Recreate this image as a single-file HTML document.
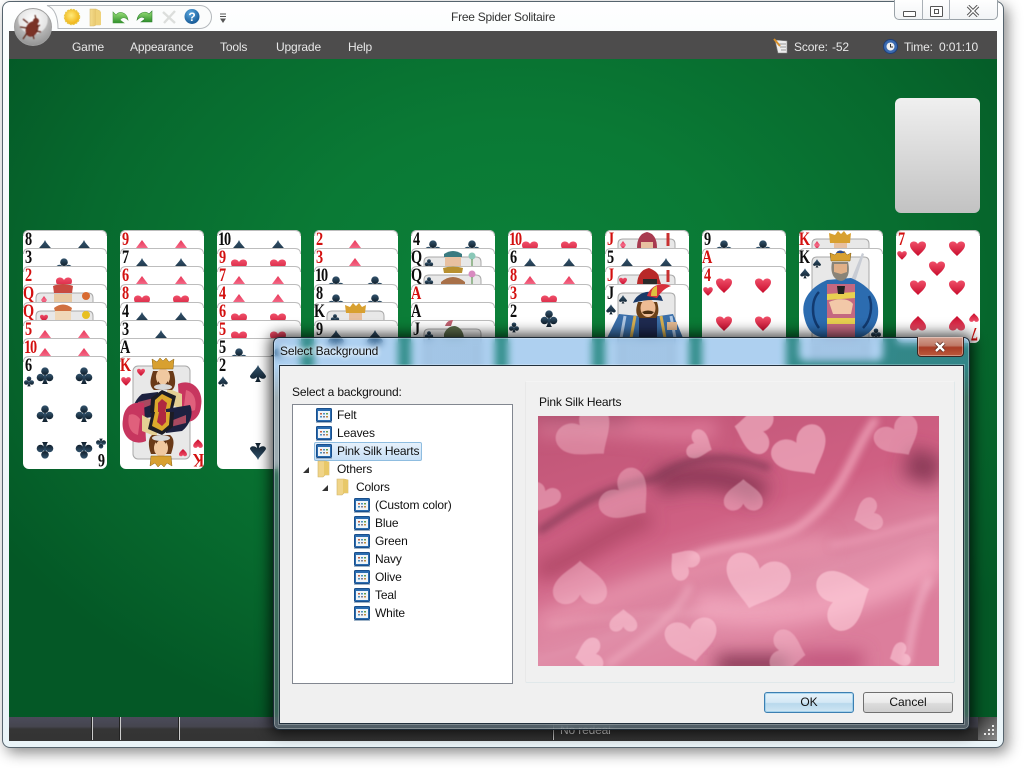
<!DOCTYPE html>
<html>
<head>
<meta charset="utf-8">
<title>Free Spider Solitaire</title>
<style>
html,body{margin:0;padding:0;background:#fff;width:1024px;height:768px;overflow:hidden}
body{position:relative;font-family:"Liberation Sans",sans-serif;font-size:12px;color:#111}
.a{position:absolute}
.t{position:absolute;white-space:nowrap;line-height:16px;letter-spacing:-.15px}
.m{color:#e8e8e8;top:39px}
svg text.r,svg text.b{font-family:"Liberation Serif",serif;font-weight:bold;font-size:19px;transform-box:fill-box;transform-origin:0 50%;transform:translateY(-1px) scaleX(.75)}
svg text.r{fill:#d3100f}
svg text.b{fill:#0c0c0c}
svg text.n{letter-spacing:-1.5px}
.btn{position:absolute;top:692px;width:88px;height:19px;text-align:center;line-height:19px;border-radius:3px}
</style>
</head>
<body>
<!-- window -->
<div class="a" style="left:2px;top:1px;width:1000px;height:745px;border:1px solid #56646e;border-radius:8px;background:linear-gradient(#fff 0,#fbfdfe 30px,#eaf4f8 100%);box-shadow:4px 5px 14px rgba(0,0,0,.45)"></div>
<div class="a" style="left:9px;top:31px;width:988px;height:28px;background:#4d4c4c"></div>
<div class="a" style="left:9px;top:59px;width:988px;height:658px;background:radial-gradient(ellipse 620px 470px at 510px 230px,#0c8039 0,#0a7a35 35%,#076a2e 70%,#045826 100%)"></div>
<div class="a" style="left:9px;top:717px;width:988px;height:24px;background:linear-gradient(#4b4b5a 0,#45454f 40%,#353535 50%,#343434 100%)"></div>
<div class="a" style="left:92px;top:717px;width:1px;height:23px;background:#ccc;box-shadow:-1px 0 #222"></div>
<div class="a" style="left:120px;top:717px;width:1px;height:23px;background:#ccc;box-shadow:-1px 0 #222"></div>
<div class="a" style="left:179px;top:717px;width:1px;height:23px;background:#ccc;box-shadow:-1px 0 #222"></div>
<div class="a" style="left:553px;top:717px;width:1px;height:23px;background:#ccc;box-shadow:-1px 0 #222"></div>
<div class="t" style="left:560px;top:722px;color:#ddd">No redeal</div>
<div class="a" style="left:978px;top:717px;width:19px;height:23px;background:linear-gradient(135deg,#3a3a3a,#8c8c8c)"></div>
<svg class="a" style="left:978px;top:717px" width="19" height="23"><path d="M14 8h2v2h-2zM10 12h2v2h-2zM14 12h2v2h-2zM6 16h2v2h-2zM10 16h2v2h-2zM14 16h2v2h-2z" fill="#e8e8e8"/></svg>

<!-- window buttons -->
<div class="a" style="left:894px;top:-1px;width:102px;height:20px;border:1px solid #9aa2a8;border-top:0;border-radius:0 0 5px 5px;background:linear-gradient(#fff,#f2f4f6)"></div>
<div class="a" style="left:922px;top:0;width:1px;height:20px;background:#aab0b6"></div>
<div class="a" style="left:949px;top:0;width:1px;height:20px;background:#aab0b6"></div>
<div class="a" style="left:903px;top:11px;width:11px;height:4px;border:1px solid #555;background:#fff;border-radius:1px"></div>
<div class="a" style="left:930px;top:6px;width:11px;height:9px;border:1px solid #555;background:#fff;border-radius:1px"></div>
<div class="a" style="left:934px;top:9px;width:3px;height:3px;border:1px solid #555"></div>
<svg class="a" style="left:965px;top:5px" width="16" height="12"><path d="M3 1L13 11M13 1L3 11" stroke="#555" stroke-width="3.4" fill="none"/><path d="M3 1L13 11M13 1L3 11" stroke="#fff" stroke-width="1.4" fill="none"/></svg>
<div class="t" style="left:451px;top:9px;color:#333;letter-spacing:-.25px">Free Spider Solitaire</div>

<!-- toolbar -->
<svg class="a" style="left:0;top:0" width="240" height="60">
<defs>
<radialGradient id="orb" cx=".5" cy=".3" r=".75"><stop offset="0" stop-color="#fff"/><stop offset=".5" stop-color="#e4e4e4"/><stop offset=".56" stop-color="#b4b4b4"/><stop offset="1" stop-color="#8e8e8e"/></radialGradient>
<radialGradient id="sun" cx=".45" cy=".4" r=".6"><stop offset="0" stop-color="#ffeb7a"/><stop offset="1" stop-color="#f0b010"/></radialGradient>
<linearGradient id="fold" x1="0" x2="1"><stop offset="0" stop-color="#f5dc8c"/><stop offset="1" stop-color="#dcb85a"/></linearGradient>
<linearGradient id="gr" x1="0" y1="0" x2="0" y2="1"><stop offset="0" stop-color="#9be07a"/><stop offset="1" stop-color="#2f8f2a"/></linearGradient>
<radialGradient id="hp" cx=".4" cy=".3" r=".8"><stop offset="0" stop-color="#5aa8e0"/><stop offset="1" stop-color="#0e4f8c"/></radialGradient>
<filter id="sb"><feGaussianBlur stdDeviation=".5"/></filter>
</defs>
<path d="M47 5.500H200A11.500 11.500 0 0 1 200 28.500H58C58 18 55 8 47 5.500Z" fill="#fbfcfc" stroke="#b4b8bc"/>
<circle cx="33" cy="27" r="18.500" fill="url(#orb)" stroke="#a0a0a0"/>
<g filter="url(#sb)">
<g fill="#7a3028">
<ellipse cx="32" cy="29" rx="6" ry="8" transform="rotate(25 32 29)"/>
<circle cx="36" cy="21" r="3"/></g>
<path d="M28 23L23 19M27 28L20 27M27 33L23 39M37 27L40 25M36 31L41 32M33 35L34 39M36 19L35 15" stroke="#5a2018" stroke-width="1.200" fill="none"/>
</g>
<g>
<circle cx="72" cy="17" r="7.500" fill="url(#sun)" stroke="#e8c848" stroke-width="1.400" stroke-dasharray="2 1"/>
<path d="M90 9H96L100 11V25L96 25 L94 26 H90Z" fill="url(#fold)" stroke="#d8bc70" stroke-width=".6"/>
<path d="M96 9L101 12V25L96 25Z" fill="#efd27a"/>
<path d="M113 12V23H124L120 20C122 17 125 17 128 20C127 13 120 10 116 15Z" fill="url(#gr)" stroke="#4a9a40" stroke-width=".6"/>
<path d="M152 11V22H141L145 19C143 16 140 17 137 20C138 13 145 10 149 14Z" fill="url(#gr)" stroke="#2f8030" stroke-width=".6"/>
<path d="M163 12L175 23M175 11L164 23" stroke="#dcdedc" stroke-width="2.400" fill="none"/>
<circle cx="192" cy="16.500" r="7.500" fill="url(#hp)"/>
<text x="192" y="21" text-anchor="middle" font-family="Liberation Sans" font-weight="bold" font-size="12" fill="#fff">?</text>
<path d="M220 14H226M220 16.500H226" stroke="#555" stroke-width="1"/><path d="M220 18.500H226L223 23Z" fill="#555"/>
</g>
</svg>

<!-- menu -->
<div class="t m" style="left:72px">Game</div>
<div class="t m" style="left:130px">Appearance</div>
<div class="t m" style="left:220px">Tools</div>
<div class="t m" style="left:276px">Upgrade</div>
<div class="t m" style="left:348px">Help</div>
<svg class="a" style="left:772px;top:38px" width="130" height="18">
<path d="M3 2L15 3V15L6 15Z" fill="#eee" stroke="#888" stroke-width=".6"/><path d="M2 1L8 8" stroke="#d8902a" stroke-width="2"/>
<path d="M7 6H14M8 9H14M9 12H14" stroke="#999"/>
<circle cx="118.500" cy="8.500" r="7" fill="#3a6ab0" stroke="#1f3f78"/><circle cx="118.500" cy="8.500" r="4" fill="#f0f0f0"/><path d="M118.500 6V9L121 9" stroke="#333" fill="none"/>
</svg>
<div class="t m" style="left:794px">Score:</div>
<div class="t m" style="left:832px">-52</div>
<div class="t m" style="left:904px">Time:</div>
<div class="t m" style="left:939px">0:01:10</div>

<!-- game -->
<svg class="a" style="left:0;top:0" width="1024" height="768">
<defs>
<linearGradient id="sk" x1="0" y1="0" x2="0" y2="1"><stop offset="0" stop-color="#f0f0f0"/><stop offset="1" stop-color="#c2c2c2"/></linearGradient>
<linearGradient id="dk" x1="0" y1="0" x2="0" y2="1"><stop offset="0" stop-color="#33546e"/><stop offset="1" stop-color="#101f2c"/></linearGradient>
<linearGradient id="rd" x1="0" y1="0" x2="0" y2="1"><stop offset="0" stop-color="#f0506a"/><stop offset="1" stop-color="#c80c2c"/></linearGradient>
<linearGradient id="dm" x1="0" y1="0" x2="0" y2="1"><stop offset="0" stop-color="#e83858"/><stop offset=".5" stop-color="#f46a88"/><stop offset="1" stop-color="#d02040"/></linearGradient>
<g id="c"><rect width="84" height="113" rx="6" fill="#fff"/><path d="M.5 6Q.5 .5 6 .5H78Q83.500 .5 83.500 6" fill="none" stroke="#bdbdbd"/></g>
<path id="s" fill="url(#dk)" d="M0-8C1.500-4 5-2 8 3C8 6 4 7 1 4C1 6 2 8 3 9H-3C-2 8-1 6-1 4C-4 7-8 6-8 3C-5-2-1.500-4 0-8Z"/>
<path id="h" fill="url(#rd)" d="M0 8C-4 4-8 1-8-3C-8-7-2-8 0-4C2-8 8-7 8-3C8 1 4 4 0 8Z"/>
<path id="d" fill="url(#dm)" d="M0-8L6 0L0 9L-6 0Z"/>
<g id="l" fill="url(#dk)"><circle cx="0" cy="-3.800" r="3.800"/><circle cx="-4.500" cy="2.500" r="3.800"/><circle cx="4.500" cy="2.500" r="3.800"/><path d="M-1 0H1C1 5 2 8 3 9H-3C-2 8-1 5-1 0Z"/></g>
<path id="fr" d="M13 113V14Q13 9 18 9H65Q70 9 70 14V113Z" fill="#e8e8e8" stroke="#a8a8a8"/>
<g id="kh">
<path d="M58 28C72 22 84 34 81 50C80 62 72 68 60 66Z" fill="#c7365f"/>
<path d="M66 34C74 36 77 44 75 54C71 56 67 54 64 50Z" fill="#e0607c"/>
<path d="M47 32L62 38L62 54L47 46Z" fill="#e4cf94"/>
<path d="M22 38C14 44 10 56 14 64L38 60V36Z" fill="#1c2140"/>
<path d="M18 46L34 42L36 47L18 54Z" fill="#a84a60"/>
<path d="M33 15C30 24 29 30 34 34H52C57 30 55 20 53 15Z" fill="#6a3a18"/>
<ellipse cx="43" cy="21" rx="7" ry="8.500" fill="#f0c8a0"/>
<path d="M38 25Q43 33 48 25L48 29Q43 34 38 29Z" fill="#5a3014"/>
<ellipse cx="43" cy="31" rx="9" ry="3" fill="#d8d8d8"/>
<path d="M33 13L32 3L37 6L40 2L43 5L46 2L49 6L54 3L53 13Z" fill="#d8a030" stroke="#8a6010" stroke-width=".5"/>
<path d="M42 34L56 40L52 57H30L31 42Z" fill="#1c1c24"/>
<path d="M42 38L52 43L49 57H34L35 44Z" fill="#dca82c"/>
<path d="M42 43L47 47L45 57H38L38 47Z" fill="#b02840"/>
</g>
<g id="ks">
<path d="M52 32L63 5L65 6L56 34Z" fill="#c8ccd4"/>
<path d="M28 32C14 38 1 50 5 68C9 88 20 90 32 90H56C68 90 81 78 79 60C78 44 62 34 52 30Z" fill="#2c6cb0"/>
<path d="M20 44C12 52 12 70 20 80M70 48C74 58 72 72 64 80" stroke="#123a70" stroke-width="2.500" fill="none"/>
<path d="M28 36H56V90H28Z" fill="#c46880"/>
<path d="M28 46L56 44V50L28 52ZM28 70H56V76H28Z" fill="#e8d050"/>
<path d="M30 54C38 50 50 50 54 56L52 66H34Z" fill="#f2c8a8"/>
<path d="M38 38L46 38L45 46L39 46Z" fill="#222"/>
<path d="M33 14C31 24 34 32 42 33C50 32 51 22 49 14Z" fill="#8a8478"/>
<path d="M35 16H48V24L42 26L35 24Z" fill="#e0b088"/>
<path d="M32 13L31 5L36 7L39 3L42 6L45 3L48 7L52 5L51 13Z" fill="#d8a030" stroke="#7a5810" stroke-width=".5"/>
<path d="M37 5Q41 0 46 5Z" fill="#2a4a90"/>
</g>
<g id="js">
<path d="M2 54L14 30L34 32H54L68 30L78 54Z" fill="#3a6ea8"/>
<path d="M20 32L16 54M66 32L70 54" stroke="#b0c8e4" stroke-width="3"/>
<path d="M30 32L26 54M56 32L60 54" stroke="#d8b050" stroke-width="3"/>
<path d="M34 32H52V54H34Z" fill="#1e2a50"/>
<path d="M62 38H72V46H62Z" fill="#e2b890"/>
<path d="M33 18C30 26 31 32 35 34H51C54 30 54 24 52 18Z" fill="#6a4018"/>
<ellipse cx="43" cy="24" rx="7.500" ry="9" fill="#eebc94"/>
<path d="M37 28Q43 25 49 28L47 30H39Z" fill="#4a2c10"/>
<path d="M28 19C32 8 46 4 56 12L58 17C48 15 38 16 28 19Z" fill="#1a3a68"/>
<path d="M42 12C46 0 58-2 66 2C60 4 56 8 52 14Z" fill="#d8303c"/>
<path d="M46 12C46 6 48 3 52 2L52 12Z" fill="#e0c040"/>
</g>
</defs>

<rect x="895" y="98" width="85" height="115" rx="6" fill="url(#sk)"/>

<!-- col 1 -->
<g transform="translate(23,230)"><use href="#c"/><use href="#s" x="22" y="18"/><use href="#s" x="61" y="18"/><text class="b" x="2" y="16">8</text></g>
<g transform="translate(23,248)"><use href="#c"/><use href="#l" x="41" y="18"/><text class="b" x="2" y="16">3</text></g>
<g transform="translate(23,266)"><use href="#c"/><use href="#h" x="41" y="18"/><text class="r" x="2" y="16">2</text></g>
<g transform="translate(23,284)"><use href="#c"/><use href="#fr"/><path d="M31 9L30 2Q40-2 50 2L49 9Z" fill="#c84a40"/><path d="M31 10H49V18H31Z" fill="#e8c8a0"/><circle cx="63" cy="12" r="4" fill="#d86a30"/><use href="#d" transform="translate(21,16) scale(.5)"/><text class="r" x="0" y="16">Q</text></g>
<g transform="translate(23,302)"><use href="#c"/><use href="#fr"/><path d="M32 7Q40 1 48 7V18H32Z" fill="#f0d8b8"/><path d="M31 6Q40-1 49 6L48 9H32Z" fill="#d07040"/><circle cx="63" cy="13" r="4" fill="#e8c020"/><use href="#h" transform="translate(21,16) scale(.5)"/><text class="r" x="0" y="16">Q</text></g>
<g transform="translate(23,320)"><use href="#c"/><use href="#d" x="22" y="18"/><use href="#d" x="61" y="18"/><text class="r" x="2" y="16">5</text></g>
<g transform="translate(23,338)"><use href="#c"/><use href="#d" x="22" y="18"/><use href="#d" x="61" y="18"/><text class="r n" x="1" y="16">10</text></g>
<g transform="translate(23,356)"><use href="#c"/><use href="#l" x="22" y="19"/><use href="#l" x="61" y="19"/><use href="#l" x="22" y="57"/><use href="#l" x="61" y="57"/><use href="#l" transform="translate(22,95) rotate(180)"/><use href="#l" transform="translate(61,95) rotate(180)"/><text class="b" x="2" y="16">6</text><use href="#l" transform="translate(6,25) scale(.6)"/><g transform="rotate(180 42 56.500)"><text class="b" x="2" y="16">6</text><use href="#l" transform="translate(6,25) scale(.6)"/></g></g>

<!-- col 2 -->
<g transform="translate(120,230)"><use href="#c"/><use href="#d" x="22" y="18"/><use href="#d" x="61" y="18"/><text class="r" x="2" y="16">9</text></g>
<g transform="translate(120,248)"><use href="#c"/><use href="#s" x="22" y="18"/><use href="#s" x="61" y="18"/><text class="b" x="2" y="16">7</text></g>
<g transform="translate(120,266)"><use href="#c"/><use href="#d" x="22" y="18"/><use href="#d" x="61" y="18"/><text class="r" x="2" y="16">6</text></g>
<g transform="translate(120,284)"><use href="#c"/><use href="#h" x="22" y="18"/><use href="#h" x="61" y="18"/><text class="r" x="2" y="16">8</text></g>
<g transform="translate(120,302)"><use href="#c"/><use href="#s" x="22" y="18"/><use href="#s" x="61" y="18"/><text class="b" x="2" y="16">4</text></g>
<g transform="translate(120,320)"><use href="#c"/><use href="#s" x="41" y="18"/><text class="b" x="2" y="16">3</text></g>
<g transform="translate(120,338)"><use href="#c"/><text class="b" x="0" y="16">A</text></g>
<g transform="translate(120,356)"><use href="#c"/><rect x="13" y="10" width="57" height="93" rx="5" fill="#e8e8e8" stroke="#a8a8a8"/><use href="#h" transform="translate(21,16) scale(.5)"/><use href="#kh"/><use href="#kh" transform="rotate(180 42 56.500)"/><use href="#h" transform="rotate(180 42 56.500) translate(21,16) scale(.5)"/><text class="r" x="0" y="16">K</text><use href="#h" transform="translate(6,25) scale(.6)"/><g transform="rotate(180 42 56.500)"><text class="r" x="0" y="16">K</text><use href="#h" transform="translate(6,25) scale(.6)"/></g></g>

<!-- col 3 -->
<g transform="translate(217,230)"><use href="#c"/><use href="#s" x="22" y="18"/><use href="#s" x="61" y="18"/><text class="b n" x="1" y="16">10</text></g>
<g transform="translate(217,248)"><use href="#c"/><use href="#h" x="22" y="18"/><use href="#h" x="61" y="18"/><text class="r" x="2" y="16">9</text></g>
<g transform="translate(217,266)"><use href="#c"/><use href="#d" x="22" y="18"/><use href="#d" x="61" y="18"/><text class="r" x="2" y="16">7</text></g>
<g transform="translate(217,284)"><use href="#c"/><use href="#d" x="22" y="18"/><use href="#d" x="61" y="18"/><text class="r" x="2" y="16">4</text></g>
<g transform="translate(217,302)"><use href="#c"/><use href="#h" x="22" y="18"/><use href="#h" x="61" y="18"/><text class="r" x="2" y="16">6</text></g>
<g transform="translate(217,320)"><use href="#c"/><use href="#h" x="22" y="18"/><use href="#h" x="61" y="18"/><text class="r" x="2" y="16">5</text></g>
<g transform="translate(217,338)"><use href="#c"/><use href="#l" x="22" y="18"/><use href="#l" x="61" y="18"/><text class="b" x="2" y="16">5</text></g>
<g transform="translate(217,356)"><use href="#c"/><use href="#s" x="41" y="17"/><use href="#s" transform="translate(41,96) rotate(180)"/><text class="b" x="2" y="16">2</text><use href="#s" transform="translate(6,25) scale(.6)"/></g>

<!-- col 4 -->
<g transform="translate(314,230)"><use href="#c"/><use href="#d" x="41" y="18"/><text class="r" x="2" y="16">2</text></g>
<g transform="translate(314,248)"><use href="#c"/><use href="#d" x="41" y="18"/><text class="r" x="2" y="16">3</text></g>
<g transform="translate(314,266)"><use href="#c"/><use href="#l" x="22" y="18"/><use href="#l" x="61" y="18"/><text class="b n" x="1" y="16">10</text></g>
<g transform="translate(314,284)"><use href="#c"/><use href="#l" x="22" y="18"/><use href="#l" x="61" y="18"/><text class="b" x="2" y="16">8</text></g>
<g transform="translate(314,302)"><use href="#c"/><use href="#fr"/><path d="M32 11L31 3L36 5L39 1L42 4L45 1L48 5L52 3L51 11Z" fill="#d8a030"/><path d="M35 11H48V18H35Z" fill="#e8c0a0"/><use href="#l" transform="translate(21,16) scale(.5)"/><text class="b" x="0" y="16">K</text></g>
<g transform="translate(314,320)"><use href="#c"/><use href="#s" x="22" y="18"/><use href="#s" x="61" y="18"/><text class="b" x="2" y="16">9</text></g>

<!-- col 5 -->
<g transform="translate(411,230)"><use href="#c"/><use href="#l" x="22" y="18"/><use href="#l" x="61" y="18"/><text class="b" x="2" y="16">4</text></g>
<g transform="translate(411,248)"><use href="#c"/><use href="#fr"/><path d="M33 6Q42 0 51 6V9H33Z" fill="#3a7a80"/><path d="M34 9H50V18H34Z" fill="#e8c0a0"/><circle cx="61" cy="8" r="3.500" fill="#8ac8b8"/><path d="M61 11V18" stroke="#4a8a40"/><use href="#l" transform="translate(18,15) scale(.5)"/><text class="b" x="0" y="16">Q</text></g>
<g transform="translate(411,266)"><use href="#c"/><use href="#fr"/><path d="M33 7L32 2Q42-1 52 2L51 7Z" fill="#b89030"/><path d="M30 16Q42 6 54 16V18H30Z" fill="#a87048"/><circle cx="61" cy="8" r="3.500" fill="#d88ac0"/><path d="M61 11V18" stroke="#4a8a40"/><use href="#l" transform="translate(18,15) scale(.5)"/><text class="b" x="0" y="16">Q</text></g>
<g transform="translate(411,284)"><use href="#c"/><text class="r" x="0" y="16">A</text></g>
<g transform="translate(411,302)"><use href="#c"/><text class="b" x="0" y="16">A</text></g>
<g transform="translate(411,320)"><use href="#c"/><use href="#fr"/><path d="M33 14Q36 6 44 6Q52 8 53 18H33Z" fill="#5a6a4a"/><path d="M34 6Q36 0 42 0L40 6Z" fill="#c06070"/><use href="#l" transform="translate(18,15) scale(.5)"/><text class="b" x="2" y="16">J</text></g>

<!-- col 6 -->
<g transform="translate(508,230)"><use href="#c"/><use href="#h" x="22" y="18"/><use href="#h" x="61" y="18"/><text class="r n" x="1" y="16">10</text></g>
<g transform="translate(508,248)"><use href="#c"/><use href="#s" x="22" y="18"/><use href="#s" x="61" y="18"/><text class="b" x="2" y="16">6</text></g>
<g transform="translate(508,266)"><use href="#c"/><use href="#d" x="22" y="18"/><use href="#d" x="61" y="18"/><text class="r" x="2" y="16">8</text></g>
<g transform="translate(508,284)"><use href="#c"/><use href="#h" x="41" y="18"/><text class="r" x="2" y="16">3</text></g>
<g transform="translate(508,302)"><use href="#c"/><use href="#l" x="41" y="16"/><use href="#l" transform="translate(41,96) rotate(180)"/><text class="b" x="2" y="16">2</text><use href="#l" transform="translate(6,25) scale(.6)"/></g>

<!-- col 7 -->
<g transform="translate(605,230)"><use href="#c"/><use href="#fr"/><path d="M32 18Q32 4 42 2Q52 4 52 18Z" fill="#a83a50"/><path d="M36 12H48V18H36Z" fill="#e8c0a0"/><path d="M63 3V16" stroke="#c83030" stroke-width="3"/><use href="#d" transform="translate(18,15) scale(.5)"/><text class="r" x="2" y="16">J</text></g>
<g transform="translate(605,248)"><use href="#c"/><use href="#s" x="22" y="18"/><use href="#s" x="61" y="18"/><text class="b" x="2" y="16">5</text></g>
<g transform="translate(605,266)"><use href="#c"/><use href="#fr"/><path d="M32 18Q33 4 44 2Q54 6 54 12L56 18Z" fill="#b82828"/><path d="M38 13H52V18H38Z" fill="#2a2a2a"/><path d="M63 4V16" stroke="#c83030" stroke-width="3"/><use href="#h" transform="translate(18,15) scale(.5)"/><text class="r" x="2" y="16">J</text></g>
<g transform="translate(605,284)"><use href="#c"/><use href="#fr"/><use href="#js"/><use href="#s" transform="translate(18,15) scale(.5)"/><text class="b" x="2" y="16">J</text><use href="#s" transform="translate(6,25) scale(.6)"/></g>

<!-- col 8 -->
<g transform="translate(702,230)"><use href="#c"/><use href="#l" x="22" y="18"/><use href="#l" x="61" y="18"/><text class="b" x="2" y="16">9</text></g>
<g transform="translate(702,248)"><use href="#c"/><text class="r" x="0" y="16">A</text></g>
<g transform="translate(702,266)"><use href="#c"/><use href="#h" x="22" y="19"/><use href="#h" x="61" y="19"/><use href="#h" x="22" y="57"/><use href="#h" x="61" y="57"/><text class="r" x="2" y="16">4</text><use href="#h" transform="translate(6,25) scale(.6)"/></g>

<!-- col 9 -->
<g transform="translate(799,230)"><use href="#c"/><use href="#fr"/><path d="M31 13L30 3L36 5L39 1L42 4L45 1L48 5L52 3L51 13Z" fill="#d8a030"/><path d="M35 13H48V18H35Z" fill="#e8c0a0"/><use href="#d" transform="translate(18,15) scale(.5)"/><text class="r" x="0" y="16">K</text></g>
<g transform="translate(799,248)"><use href="#c"/><use href="#fr"/><use href="#ks"/><use href="#s" transform="translate(18,15) scale(.5)"/><text class="b" x="0" y="16">K</text><use href="#s" transform="translate(6,25) scale(.6)"/><use href="#l" transform="translate(77,85) scale(.6)"/></g>

<!-- col 10 -->
<g transform="translate(896,230)"><use href="#c"/><use href="#h" x="22" y="18"/><use href="#h" x="61" y="18"/><use href="#h" x="41" y="38"/><use href="#h" x="22" y="57"/><use href="#h" x="61" y="57"/><use href="#h" transform="translate(22,94) rotate(180)"/><use href="#h" transform="translate(61,94) rotate(180)"/><text class="r" x="2" y="16">7</text><use href="#h" transform="translate(6,25) scale(.6)"/><g transform="rotate(180 42 56.500)"><text class="r" x="2" y="16">7</text><use href="#h" transform="translate(6,25) scale(.6)"/></g></g>
</svg>

<!-- dialog -->
<div class="a" style="left:273px;top:337px;width:695px;height:391px;border:1px solid #1c2a36;border-radius:6px;background:linear-gradient(rgba(93,162,226,.5) 0,rgba(93,162,226,.5) 28px,rgba(95,120,130,.6) 60px,rgba(90,110,118,.65) 100%);backdrop-filter:blur(4px);box-shadow:0 0 14px 3px rgba(0,0,0,.75),inset 0 0 0 1px rgba(255,255,255,.3)"></div>
<div class="a" style="left:279px;top:365px;width:683px;height:357px;border:1px solid #22303c;box-shadow:0 0 0 1px rgba(255,255,255,.25);background:#f0f0f0"></div>
<div class="t" style="left:280px;top:343px;color:#111;text-shadow:0 0 6px #fff,0 0 4px #fff">Select Background</div>
<div class="a" style="left:917px;top:337px;width:45px;height:19px;border:1px solid #3a2420;border-top:0;border-radius:0 0 4px 4px;background:linear-gradient(#d0a090 0,#c07a68 45%,#a83c26 55%,#bc5a3c 100%);box-shadow:inset 0 0 0 1px rgba(255,255,255,.35)"></div>
<svg class="a" style="left:933px;top:341px" width="14" height="12"><path d="M3 2L11 10M11 2L3 10" stroke="#5a2a20" stroke-width="4"/><path d="M3 2L11 10M11 2L3 10" stroke="#fff" stroke-width="2.400"/></svg>

<div class="t" style="left:292px;top:384px">Select a background:</div>
<div class="a" style="left:292px;top:404px;width:219px;height:278px;border:1px solid #828790;background:#fff"></div>
<div class="a" style="left:314px;top:442px;width:106px;height:17px;border:1px solid #8fbde0;border-radius:2px;background:linear-gradient(#e6f1fb,#c8e0f6)"></div>
<svg class="a" style="left:292px;top:404px" width="100" height="230">
<defs>
<g id="i"><rect x=".5" y=".5" width="15" height="13" fill="#2a6cb0" stroke="#1a4f8c" rx="1"/><rect x="2" y="3" width="12" height="9" fill="#f0f4f8"/><path d="M4 5h2v1.500h-2z" fill="#c06040"/><path d="M7 5h2v1.500h-2z" fill="#4a90c0"/><path d="M10 5h2v1.500h-2z" fill="#60a050"/><path d="M4 8h2v1.500h-2z" fill="#4a90c0"/><path d="M7 8h2v1.500h-2z" fill="#7a7a90"/><path d="M10 8h2v1.500h-2z" fill="#c08a40"/><path d="M0 14.500H16" stroke="#a0b4c8"/></g>
<g id="f"><path d="M1 0H8L12 1V14L8 14L6 16H1Z" fill="#f0d488" stroke="#d0b468" stroke-width=".6"/><path d="M7 0L12 1V14H7Z" fill="#e8c868"/></g>
</defs>
<use href="#i" x="24" y="4"/><use href="#i" x="24" y="22"/><use href="#i" x="24" y="40"/>
<use href="#f" x="25" y="57"/><use href="#f" x="44" y="75"/>
<use href="#i" x="62" y="94"/><use href="#i" x="62" y="112"/><use href="#i" x="62" y="130"/><use href="#i" x="62" y="148"/><use href="#i" x="62" y="166"/><use href="#i" x="62" y="184"/><use href="#i" x="62" y="202"/>
<path d="M11 69L17 63V69Z" fill="#333"/><path d="M30 87L36 81V87Z" fill="#333"/>
</svg>
<div class="t" style="left:337px;top:407px">Felt</div>
<div class="t" style="left:337px;top:425px">Leaves</div>
<div class="t" style="left:337px;top:443px">Pink Silk Hearts</div>
<div class="t" style="left:337px;top:461px">Others</div>
<div class="t" style="left:356px;top:479px">Colors</div>
<div class="t" style="left:375px;top:497px">(Custom color)</div>
<div class="t" style="left:375px;top:515px">Blue</div>
<div class="t" style="left:375px;top:533px">Green</div>
<div class="t" style="left:375px;top:551px">Navy</div>
<div class="t" style="left:375px;top:569px">Olive</div>
<div class="t" style="left:375px;top:587px">Teal</div>
<div class="t" style="left:375px;top:605px">White</div>

<div class="a" style="left:525px;top:381px;width:428px;height:300px;border:1px solid #e0e8ea;border-top-color:#f4f4f4;border-left-color:#e8e8e8;border-radius:2px"></div>
<div class="t" style="left:539px;top:394px">Pink Silk Hearts</div>

<svg class="a" style="left:538px;top:416px" width="401" height="250" viewBox="24 93 1203 750" preserveAspectRatio="none">
<defs>
<linearGradient id="bg" x1="0" y1="0" x2=".5" y2="1"><stop offset="0" stop-color="#bf5576"/><stop offset=".5" stop-color="#cf6083"/><stop offset=".78" stop-color="#e08ea8"/><stop offset="1" stop-color="#dc7e9c"/></linearGradient>
<filter id="b1" x="-30%" y="-30%" width="160%" height="160%"><feGaussianBlur stdDeviation="26"/></filter>
<filter id="b2" x="-30%" y="-30%" width="160%" height="160%"><feGaussianBlur stdDeviation="11"/></filter>
<filter id="b3" x="-5%" y="-5%" width="110%" height="110%"><feGaussianBlur stdDeviation="1.800"/></filter>
<path id="ht" d="M0 50C-18 32-56 16-56-14C-56-44-14-50 0-20C14-50 56-44 56-14C56 16 18 32 0 50Z"/>
</defs>
<rect x="24" y="93" width="1203" height="750" fill="url(#bg)"/>
<g filter="url(#b1)">
<path d="M24 130C200 100 400 160 560 130" stroke="#ea8aa8" stroke-width="50" fill="none" opacity=".7"/>
<path d="M24 100H300" stroke="#963f5e" stroke-width="40" fill="none" opacity=".7"/>
<path d="M380 300C450 260 600 260 700 330" stroke="#8f3a58" stroke-width="75" fill="none"/>
<path d="M1130 230L1227 260" stroke="#8c3a58" stroke-width="90" fill="none"/>
<path d="M24 720C300 620 500 520 900 480" stroke="#ea98b0" stroke-width="60" fill="none" opacity=".7"/>
<path d="M500 660C700 720 1000 660 1227 520" stroke="#f2a8be" stroke-width="80" fill="none" opacity=".8"/>
<path d="M560 840H780" stroke="#863854" stroke-width="60" fill="none"/>
<path d="M800 830H1000" stroke="#c0557c" stroke-width="60" fill="none"/>
<path d="M24 560C150 520 240 430 360 400" stroke="#b04868" stroke-width="55" fill="none"/>
</g>
<g filter="url(#b2)">
<path d="M24 440C120 380 200 310 380 280C450 230 560 190 720 250" stroke="#843856" stroke-width="20" fill="none" opacity=".85"/>
<path d="M1040 100C960 200 950 330 800 430C700 480 560 480 480 520" stroke="#f0a4ba" stroke-width="20" fill="none"/>
<path d="M1227 400C1100 430 1000 470 900 480" stroke="#eea0b8" stroke-width="16" fill="none" opacity=".8"/>
<path d="M1200 580C1160 650 1140 760 1130 840" stroke="#f5b8ca" stroke-width="18" fill="none" opacity=".8"/>
<path d="M480 600C450 680 350 760 230 840" stroke="#f4b4c6" stroke-width="16" fill="none" opacity=".7"/>
<path d="M60 720C250 680 500 690 800 660" stroke="#eea8bc" stroke-width="10" fill="none" opacity=".6"/>
</g>
<g fill="#ffd0dc" filter="url(#b3)">
<use href="#ht" transform="translate(170 145) rotate(-40) scale(1.600)" opacity=".36"/>
<use href="#ht" transform="translate(508 180) rotate(-70) scale(.8)" opacity=".45"/>
<use href="#ht" transform="translate(675 135) rotate(100) scale(1.250)" opacity=".5"/>
<use href="#ht" transform="translate(815 200) rotate(-30) scale(1.550)" opacity=".5"/>
<use href="#ht" transform="translate(1105 155) rotate(-30) scale(1.250)" opacity=".4"/>
<use href="#ht" transform="translate(40 335) rotate(20) scale(.9)" opacity=".4"/>
<use href="#ht" transform="translate(290 335) rotate(-50) scale(1.500)" opacity=".36"/>
<use href="#ht" transform="translate(640 335) rotate(180) scale(1.050)" opacity=".4"/>
<use href="#ht" transform="translate(1015 390) rotate(70) scale(.9)" opacity=".4"/>
<use href="#ht" transform="translate(460 535) rotate(130) scale(.9)" opacity=".5"/>
<use href="#ht" transform="translate(680 585) rotate(15) scale(1.750)" opacity=".55"/>
<use href="#ht" transform="translate(940 640) rotate(-110) scale(1.650)" opacity=".6"/>
<use href="#ht" transform="translate(150 600) rotate(180) scale(1.450)" opacity=".4"/>
<use href="#ht" transform="translate(280 710) rotate(180) scale(.75)" opacity=".5"/>
<use href="#ht" transform="translate(485 760) rotate(-10) scale(1.400)" opacity=".5"/>
<use href="#ht" transform="translate(770 800) rotate(-80) scale(1.150)" opacity=".4"/>
<use href="#ht" transform="translate(180 810) rotate(80) scale(.9)" opacity=".55"/>
<use href="#ht" transform="translate(1110 810) rotate(70) scale(.65)" opacity=".55"/>
</g>
</svg>

<div class="btn" style="left:764px;border:1px solid #3c7fb1;background:linear-gradient(#e6f3fa 0,#d4e8f5 50%,#b8d8ec 55%,#d0e6f3 100%);box-shadow:0 0 0 1px rgba(120,190,230,.5) inset">OK</div>
<div class="btn" style="left:863px;border:1px solid #707070;background:linear-gradient(#f4f4f4 0,#ebebeb 50%,#dcdcdc 55%,#cfcfcf 100%)">Cancel</div>
</body>
</html>
